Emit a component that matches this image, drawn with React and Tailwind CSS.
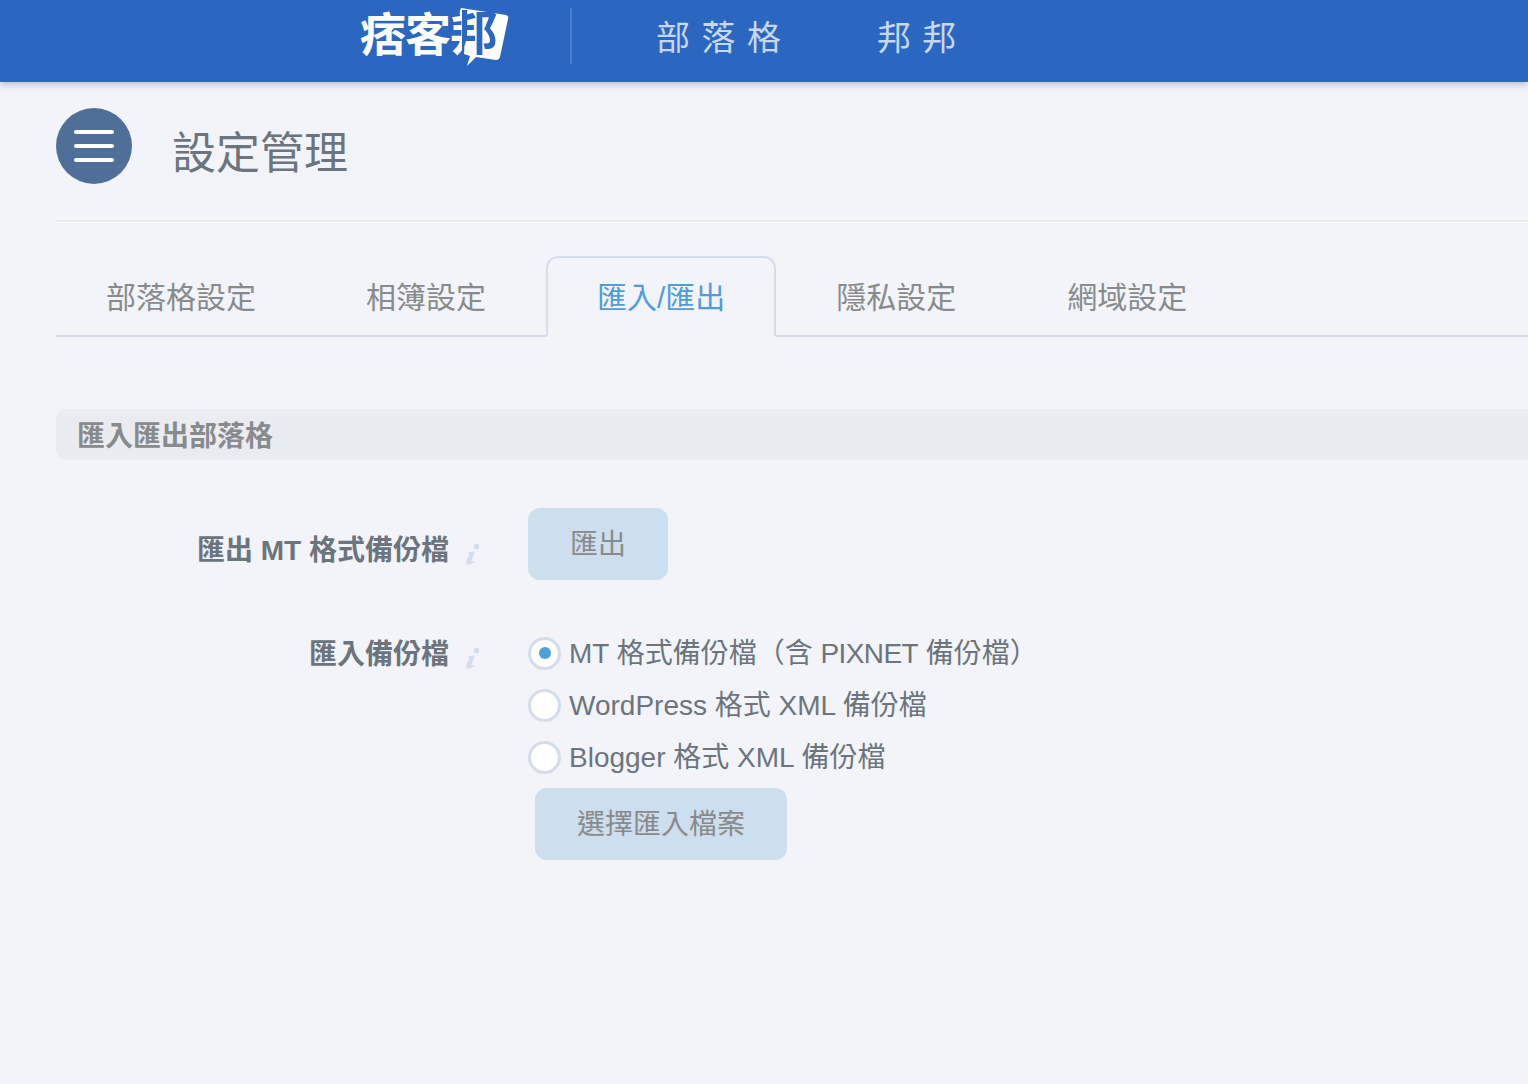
import React from 'react';

const CJK = "font-['Liberation_Sans','Noto_Sans_CJK_TC',sans-serif]";

const Logo = () => (
  <div className="flex items-center w-[150px] h-[66px] relative">
    <span className="text-[46px] leading-none font-bold text-white tracking-[-1px] mb-[12px]">痞客</span>
    <svg className="absolute left-[98px] top-0" width="52" height="60" viewBox="0 0 52 60">
      <path d="M3 0 L48 7 Q51 8 50 11 L42 49 Q41 52 38 52 L18 49 L9 58 L12 48 L6 46 Q7 36 5 28 Q3 18 4 12 Q0 6 3 0 Z" fill="#fff" />
    </svg>
    <span className="absolute left-[90px] top-[2px] text-[48px] leading-none font-bold bg-[linear-gradient(90deg,#ffffff_0%,#ffffff_26%,#2b67c0_26%,#2b67c0_100%)] bg-clip-text text-transparent">邦</span>
  </div>
);

const tabs = [
  { label: '部落格設定', cls: '-ml-px' },
  { label: '相簿設定', cls: '' },
  { label: '匯入/匯出', cls: 'ml-px' },
  { label: '隱私設定', cls: 'ml-px' },
  { label: '網域設定', cls: 'ml-px' },
];

const InfoMark = () => (
  <svg className="ml-[16px] mt-[6px] shrink-0" width="15" height="21" viewBox="0 0 15 21">
    <circle cx="11.5" cy="2.8" r="2.7" fill="#d5dcea" />
    <path d="M3 9 Q6 7 10 7.5 L6.5 17 Q6.5 18.5 9 16.5 L9.5 17.5 Q6 21 2.5 20.5 Q0.5 20 1.5 17 L4.5 10 Q4 9.2 3 9.5 Z" fill="#d5dcea" />
  </svg>
);

const Radio = ({ checked, children }) => (
  <div className="flex items-center h-[52px]">
    <span className="w-[33px] h-[33px] rounded-full bg-white border-[3px] border-[#d5dcea] flex items-center justify-center shrink-0">
      {checked && <span className="w-[12px] h-[12px] rounded-full bg-[#4f9dd9]" />}
    </span>
    <span className="ml-[8px] pt-[2px] text-[28px] text-[#6c757d]">{children}</span>
  </div>
);

export default function App() {
  return (
    <div className={`min-h-screen bg-[#f2f4fa] overflow-hidden ${CJK}`}>
      <header className="h-[82px] bg-[#2b67c0] shadow-[0_2px_8px_rgba(0,0,0,0.25)] flex items-center pl-[360px]">
        <Logo />
        <div className="w-[2px] h-[56px] bg-[#4a7fcb] ml-[60px] mb-[10px]" />
        <nav className="flex items-center ml-[84px] gap-[95px] text-[34px] text-[#c6d8f0] mb-[6px]">
          <span className="tracking-[1px]">部 落 格</span>
          <span className="tracking-[1px]">邦 邦</span>
        </nav>
      </header>

      <main className="pl-[56px]">
        <div className="flex items-center pt-[26px] pb-[36px] border-b-2 border-[#e9ebf1] shadow-[0_1px_0_#ffffff]">
          <button className="w-[76px] h-[76px] rounded-full bg-[#4f6f98] flex flex-col items-center justify-center gap-[10px]">
            <span className="w-[40px] h-[4px] rounded-full bg-white" />
            <span className="w-[40px] h-[4px] rounded-full bg-white" />
            <span className="w-[40px] h-[4px] rounded-full bg-white" />
          </button>
          <h1 className="ml-[40px] text-[44px] leading-none text-[#6c757d] mt-[16px]">設定管理</h1>
        </div>

        <div className="flex gap-2 mt-[34px] border-b-2 border-[#d5dcea] h-[81px]">
          {tabs.map((t, i) => (
            <div
              key={t.label}
              className={`px-[49px] pt-[2px] h-[81px] flex items-center text-[30px] rounded-t-[12px] border-2 ${t.cls} ${
                i === 2
                  ? 'border-[#d5dcea] border-b-[#f2f4fa] text-[#4f9dd9]'
                  : 'border-transparent text-[#888b8d]'
              }`}
            >
              {t.label}
            </div>
          ))}
        </div>

        <div className="mt-[72px] h-[51px] bg-[#ebecf1] rounded-l-[10px] flex items-center pl-[21px] pt-[4px] text-[28px] font-bold text-[#888b8d]">
          匯入匯出部落格
        </div>

        <div className="mt-[48px] flex flex-col">
          <div className="flex items-start">
            <div className="w-[424px] flex items-center justify-end h-[86px]">
              <span className="text-[28px] font-bold text-[#6c757d]">匯出 MT 格式備份檔</span>
              <InfoMark />
            </div>
            <button className="ml-[48px] w-[140px] h-[72px] rounded-[12px] bg-[#cddeee] text-[28px] text-[#888b8d] pt-[2px]">匯出</button>
          </div>

          <div className="flex items-start mt-[33px]">
            <div className="w-[424px] flex items-center justify-end h-[52px] pt-[4px]">
              <span className="text-[28px] font-bold text-[#6c757d]">匯入備份檔</span>
              <InfoMark />
            </div>
            <div className="ml-[48px] flex flex-col">
              <Radio checked>
                MT 格式備份檔（含 <span className="tracking-[-0.6px]">PIXNET</span> 備份檔）
              </Radio>
              <Radio>WordPress 格式 XML 備份檔</Radio>
              <Radio>Blogger 格式 XML 備份檔</Radio>
              <button className="ml-[7px] mt-[5px] w-[252px] h-[72px] rounded-[12px] bg-[#cddeee] text-[28px] text-[#888b8d] pt-[2px]">選擇匯入檔案</button>
            </div>
          </div>
        </div>
      </main>
    </div>
  );
}
